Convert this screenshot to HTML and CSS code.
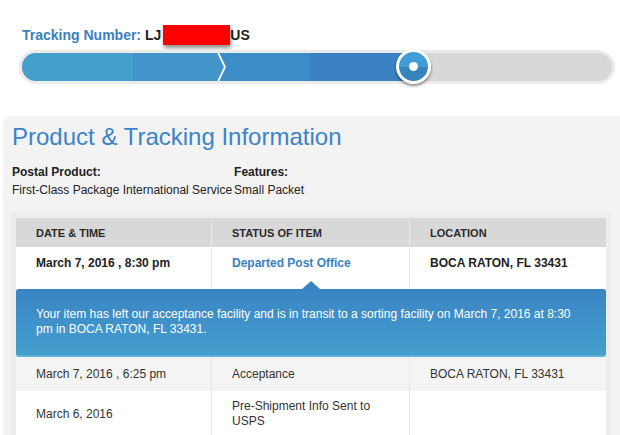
FILE: index.html
```html
<!DOCTYPE html>
<html>
<head>
<meta charset="utf-8">
<link rel="stylesheet" href="styles.css">
</head>
<body>
<div class="top">
  <div class="tn"><span class="tn-label">Tracking Number:</span> LJ<span class="redact"></span>US</div>
  <div class="progress">
    <div class="fill">
      <div class="seg s1"></div>
      <div class="seg s2"></div>
      <svg class="chev" width="9" height="28" viewBox="0 0 9 28">
        <rect x="0" y="0" width="9" height="28" fill="#3d8cc7"/>
        <polygon points="0,0 1,0 8,14 1,28 0,28" fill="#4294c9"/>
        <polyline points="0.8,-1 8,14 0.8,29" fill="none" stroke="#ffffff" stroke-width="1.8"/>
      </svg>
      <div class="seg s3"></div>
      <div class="seg s4"></div>
    </div>
    <div class="knob"><div class="dot"></div></div>
  </div>
</div>

<div class="card">
  <h1 class="title">Product &amp; Tracking Information</h1>
  <div class="info">
    <div class="info-h">Postal Product:</div>
    <div class="info-h">Features:</div>
    <div>First-Class Package International Service</div>
    <div>Small Packet</div>
  </div>

  <div class="frame">
    <div class="grid head">
      <div class="cell">DATE &amp; TIME</div>
      <div class="cell">STATUS OF ITEM</div>
      <div class="cell">LOCATION</div>
    </div>
    <div class="grid row current">
      <div class="cell">March 7, 2016 , 8:30 pm</div>
      <div class="cell status">Departed Post Office</div>
      <div class="cell">BOCA RATON, FL 33431</div>
    </div>
    <div class="popup">
      <span class="arrow"></span>
      Your item has left our acceptance facility and is in transit to a sorting facility on March 7, 2016 at 8:30 pm in BOCA RATON, FL 33431.
    </div>
    <div class="grid row alt">
      <div class="cell">March 7, 2016 , 6:25 pm</div>
      <div class="cell">Acceptance</div>
      <div class="cell">BOCA RATON, FL 33431</div>
    </div>
    <div class="grid row last">
      <div class="cell">March 6, 2016</div>
      <div class="cell">Pre-Shipment Info Sent to USPS</div>
      <div class="cell"></div>
    </div>
  </div>
</div>
</body>
</html>
```

FILE: styles.css
```css
* { box-sizing: border-box; }
html, body { margin: 0; padding: 0; background: #ffffff; }
body {
  font-family: "Liberation Sans", Arial, sans-serif;
  color: #333333;
  overflow: hidden;
  width: 620px;
  height: 435px;
}

.top { padding: 25px 5px 0 19px; }
.tn {
  padding-left: 3px;
  height: 18px;
  line-height: 18px;
  font-size: 14px;
  font-weight: bold;
  color: #222222;
  white-space: nowrap;
}
.tn-label { color: #3a7fc1; }
.redact {
  display: inline-block;
  width: 67px;
  height: 20px;
  margin-left: 2px;
  vertical-align: -5px;
  background: #ff0000;
  box-shadow: 1px 3px 4px rgba(0, 0, 0, 0.45);
}

.progress {
  position: relative;
  margin-top: 7px;
  height: 34px;
  border: 3px solid #ebebeb;
  border-radius: 17px;
  background: #d8d8d8;
}
.fill {
  display: flex;
  height: 28px;
  width: 392px;
  border-radius: 14px 0 0 14px;
  overflow: hidden;
}
.seg { height: 28px; }
.s1 { width: 111px; background: #449fcc; }
.s2 { width: 84px; background: #4294c9; }
.chev { display: block; flex: none; }
.s3 { width: 84px; background: #3d8cc7; }
.s4 { width: 104px; background: #3a82c2; }

.knob {
  position: absolute;
  left: 374px;
  top: -4px;
  width: 35px;
  height: 35px;
  border-radius: 50%;
  border: 3px solid #ffffff;
  background: linear-gradient(to bottom, #3f9dd8 0%, #3f9dd8 50%, #3584be 50%, #3584be 100%);
  box-shadow: 0 2px 3px rgba(0, 0, 0, 0.45);
  display: flex;
  align-items: center;
  justify-content: center;
}
.dot {
  width: 9px;
  height: 9px;
  border-radius: 50%;
  background: #ffffff;
}

.card {
  margin: 32px 0 0 3px;
  padding: 7px 0 0 8px;
  background: #f4f3f4;
  border-radius: 6px 0 0 0;
  height: 320px;
}
.title {
  margin: 0 0 0 1px;
  font-size: 24px;
  line-height: 28px;
  font-weight: normal;
  color: #3b84c8;
}
.info {
  margin: 12px 0 0 1px;
  display: grid;
  grid-template-columns: auto auto;
  justify-content: start;
  column-gap: 2px;
  font-size: 12px;
  line-height: 18px;
  color: #222222;
}
.info-h { font-weight: bold; }

.frame {
  margin-top: 13px;
  width: 600px;
  padding: 6px 5px 0 5px;
  background: #ededed;
  height: 240px;
}
.grid {
  display: grid;
  grid-template-columns: 196px 198px 196px;
}
.cell {
  padding-left: 20px;
  padding-right: 10px;
  border-right: 1px solid #e6e6e6;
  display: flex;
  align-items: center;
}
.cell:last-child { border-right: none; }

.head {
  background: #d8d8d8;
  height: 29px;
  font-size: 11px;
  font-weight: bold;
  color: #2a2a2a;
}
.head .cell { border-right-color: #e9e9e9; }

.row {
  font-size: 12px;
  line-height: 15px;
}
.current {
  background: #ffffff;
  height: 42px;
  font-weight: bold;
  color: #222222;
}
.current .cell { align-items: flex-start; padding-top: 9px; }
.status { color: #3a7fc1; }

.popup {
  position: relative;
  padding: 18px 30px 18px 20px;
  background: linear-gradient(to bottom, #3a84c4 0%, #449fce 100%);
  border-radius: 3px;
  border-bottom: 2px solid #5cb1df;
  color: #ffffff;
  font-size: 12px;
  line-height: 15px;
}
.arrow {
  position: absolute;
  left: 286px;
  top: -8px;
  width: 0;
  height: 0;
  border-left: 9px solid transparent;
  border-right: 9px solid transparent;
  border-bottom: 8px solid #3a84c4;
}

.alt {
  background: #f4f4f4;
  height: 34px;
}
.last {
  background: #ffffff;
  height: 46px;
}
```
